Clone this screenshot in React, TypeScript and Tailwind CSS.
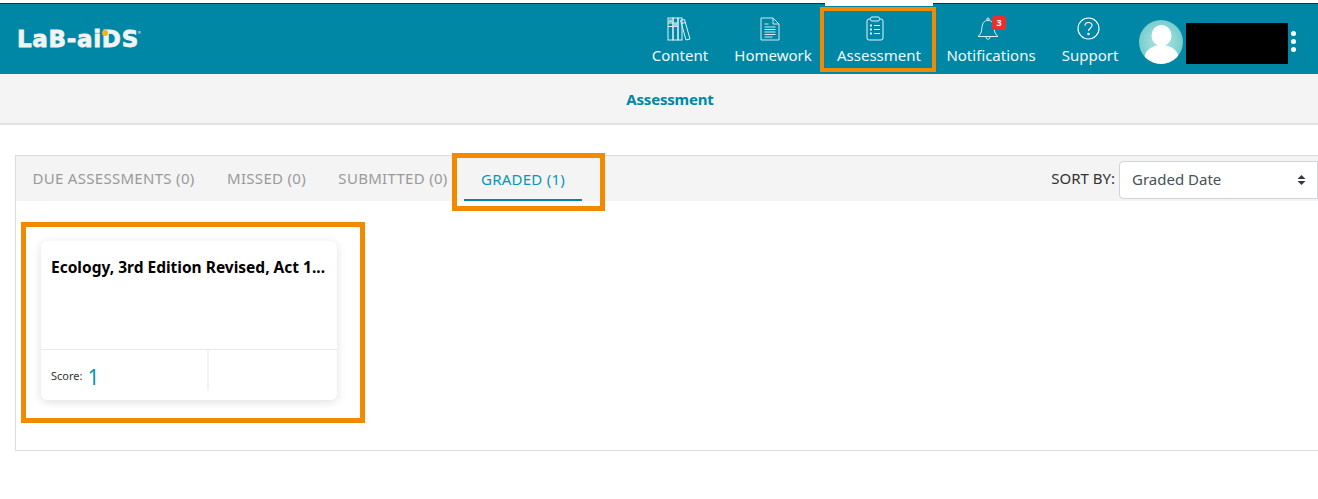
const font = { fontFamily: '"Noto Sans", "Open Sans", sans-serif' };

function ContentIcon() {
  return (
    <svg width="24" height="24" viewBox="0 0 24 24" fill="none" stroke="#dff3f7" strokeWidth="1">
      <rect x="1" y="1" width="5" height="22" />
      <rect x="6" y="1" width="5" height="22" />
      <rect x="11" y="1" width="4" height="22" />
      <path d="M1 6h10M1 9.500h10" />
      <path d="M1.500 2.500h4v3h-4zM6.500 6h4v3.500h-4z" fill="#9fd3df" stroke="none" />
      <path d="M13.500 3.500l4-1 5.500 19.500-4 1z" />
      <path d="M14.500 6.500l4-1" />
    </svg>
  );
}

function HomeworkIcon() {
  return (
    <svg width="20" height="24" viewBox="0 0 20 24" fill="none" stroke="#cfeaf0" strokeWidth="1">
      <path d="M1 1h12l6 6v16H1z" />
      <path d="M13 1v6h6" />
      <path d="M4.500 7h4M4.500 10h11M4.500 12.500h11M4.500 15h11M4.500 17.500h11M4.500 20h8" />
    </svg>
  );
}

function AssessmentIcon() {
  return (
    <svg width="18" height="25" viewBox="0 0 18 25" fill="none" stroke="#e4f5f8" strokeWidth="1">
      <rect x="1" y="3" width="16" height="21" rx="2" />
      <rect x="4.500" y="1" width="9" height="4" rx="1.500" fill="#0087a5" />
      <path d="M4 9.500h2M4 13.500h2M4 17.500h2" strokeWidth="2" />
      <path d="M8 9.500h6M8 13.500h6M8 17.500h6" />
    </svg>
  );
}

function BellIcon() {
  return (
    <svg width="22" height="24" viewBox="0 0 22 24" fill="none" stroke="#dff3f7" strokeWidth="1">
      <path d="M1 19.500c2.500-2 3.500-4 3.800-8C5.200 6.500 7 3.500 11 3.300c4 .2 5.800 3.200 6.200 8.200.3 4 1.300 6 3.800 8z" />
      <circle cx="11" cy="2.200" r="1.200" />
      <path d="M9 20c0 3 4 3 4 0" />
    </svg>
  );
}

function HelpIcon() {
  return (
    <svg width="23" height="23" viewBox="0 0 23 23" fill="none" stroke="#ffffff" strokeWidth="1.100">
      <circle cx="11.500" cy="11.500" r="10.500" />
      <path d="M8 8.800c0-2 1.600-3.300 3.500-3.300s3.500 1.300 3.500 3c0 2.800-3.500 2.600-3.500 5.500" />
      <circle cx="11.500" cy="17" r=".7" fill="#ffffff" />
    </svg>
  );
}

function Avatar() {
  return (
    <div className="w-11 h-11 rounded-full overflow-hidden shrink-0 bg-[radial-gradient(circle,#b5e8e5_0%,#5fc1c4_100%)]">
      <svg width="44" height="44" viewBox="0 0 44 44" fill="#ffffff">
        <ellipse cx="22.500" cy="15.500" rx="10" ry="10.500" />
        <ellipse cx="22.500" cy="38" rx="17" ry="13" />
      </svg>
    </div>
  );
}

const navItems = [
  { label: "Content", icon: <ContentIcon />, width: "w-[92px]", shift: "-ml-[3px]" },
  { label: "Homework", icon: <HomeworkIcon />, width: "w-[94px]", shift: "-ml-[7px]" },
  { label: "Assessment", icon: <AssessmentIcon />, width: "w-[118px]", shift: "-ml-[9px]", active: true },
  { label: "Notifications", icon: <BellIcon />, width: "w-[106px]", shift: "-ml-[6px]", badge: "3" },
  { label: "Support", icon: <HelpIcon />, width: "w-[92px]", shift: "-ml-[4px]" },
];

const tabs = [
  { label: "DUE ASSESSMENTS (0)", width: "w-[195px]" },
  { label: "MISSED (0)", width: "w-[111px]" },
  { label: "SUBMITTED (0)", width: "w-[142px]" },
];

export default function App() {
  return (
    <div className="bg-white min-h-[499px] overflow-hidden" style={font}>
      <div className="h-[3px] bg-white" />
      <header className="h-[71px] bg-[#0087a5] border-t border-[#2b2b2b] flex items-stretch">
        <div className="pl-[17px] pt-[22px] w-[634px] shrink-0">
          <div className="relative w-fit text-[23px] leading-[26px] font-black text-[#f0f4f4] tracking-[0.7px] [-webkit-text-stroke:0.8px_#f0f4f4] [font-family:'DejaVu_Sans',sans-serif]">
            LaB-aiDS
            <span className="absolute left-[85px] top-[4px] w-[6px] h-[6px] rounded-full bg-[#f7b21b] [-webkit-text-stroke:0]" />
            <span className="absolute -right-[3px] top-[5px] text-[4px] leading-[4px] font-normal [-webkit-text-stroke:0]">®</span>
          </div>
        </div>
        <nav className="flex items-stretch">
          {navItems.map((item) => (
            <div key={item.label} className={`relative flex flex-col items-center ${item.width}`}>
              {item.active && (
                <>
                  <span className="absolute -top-px left-[5px] w-[108px] h-[3px] bg-white" />
                  <span className="absolute top-[3px] left-0 w-[116px] h-[65px] border-[4px] border-[#f28a00]" />
                </>
              )}
              <div className={`h-[25px] mt-[12px] flex items-center justify-center relative ${item.shift}`}>
                {item.icon}
                {item.badge && (
                  <span className="absolute left-[15px] top-[0px] w-[14px] h-[14px] rounded-[3px] bg-[#ee2e2e] text-white text-[9px] leading-[14px] font-bold text-center">
                    {item.badge}
                  </span>
                )}
              </div>
              <span className="mt-[3px] text-[15px] leading-[22px] text-[#f0fafb] whitespace-nowrap">
                {item.label}
              </span>
            </div>
          ))}
        </nav>
        <div className="ml-[3px] pt-[16px] flex items-start">
          <Avatar />
          <div className="ml-[3px] mt-[3px] w-[102px] h-[41px] bg-black" />
          <div className="ml-[3px] mt-[11px] flex flex-col gap-[3px]">
            <span className="w-[5px] h-[5px] rounded-full bg-white" />
            <span className="w-[5px] h-[5px] rounded-full bg-white" />
            <span className="w-[5px] h-[5px] rounded-full bg-white" />
          </div>
        </div>
      </header>

      <div className="h-[51px] bg-[#f4f4f4] border-b-2 border-[#e3e3e3] flex items-center justify-center pl-[22px] pt-[2px]">
        <span className="text-[15px] font-bold text-[#0087a5] tracking-[-0.2px]">Assessment</span>
      </div>

      <main className="ml-[15px] mt-[30px] h-[296px] border border-[#dddddd] border-r-0">
        <div className="h-[45px] bg-[#f4f4f4] flex items-stretch">
          {tabs.map((tab) => (
            <div
              key={tab.label}
              className={`${tab.width} pt-[11px] text-center text-[15px] leading-[22px] text-[#9a9a9a] whitespace-nowrap tracking-[0.3px]`}
            >
              {tab.label}
            </div>
          ))}
          <div className="relative w-[118px]">
            <div className="pt-[12px] text-center text-[15px] leading-[22px] text-[#0a95b4] whitespace-nowrap tracking-[0.25px]">
              GRADED (1)
            </div>
            <span className="absolute left-0 right-0 top-[43px] h-[2px] bg-[#0087a5]" />
            <span className="absolute -left-[12px] -top-[3px] w-[153px] h-[58px] border-[5px] border-[#f28a00]" />
          </div>
          <div className="ml-auto flex items-center">
            <span className="text-[15px] text-[#333333] whitespace-nowrap mr-[4px]">SORT BY:</span>
            <div className="w-[199px] h-[38px] mt-[2px] bg-white border border-[#ced4da] rounded-l-[4px] flex items-center pl-[12px] text-[15px] text-[#495057]">
              Graded Date
              <svg className="ml-auto mr-[11px]" width="9" height="12" viewBox="0 0 9 12" fill="#343a40">
                <path d="M4.500 1L8.500 5H.5zM4.500 11L.5 7h8z" />
              </svg>
            </div>
          </div>
        </div>

        <div className="pl-[25px] pt-[40px]">
          <div className="relative w-[296px] h-[159px] rounded-[6px] bg-white shadow-[0_2px_10px_rgba(0,0,0,0.13)] flex flex-col">
            <span className="absolute -left-[20px] -top-[19px] w-[344px] h-[201px] border-[5px] border-[#f28a00]" />
            <div className="h-[109px] pl-[10px] pt-[15px] border-b border-[#e8e8e8]">
              <p className="text-[15.5px] leading-[22px] font-bold text-black whitespace-nowrap">
                Ecology, 3rd Edition Revised, Act 1...
              </p>
            </div>
            <div className="flex">
              <div className="w-[168px] h-[40px] border-r-2 border-[#f2f2f2] pl-[10px] flex items-center pt-[13px]">
                <span className="text-[11px] text-[#333333]">Score:</span>
                <span className="ml-[5px] text-[21px] leading-[20px] text-[#0a95b4]">1</span>
              </div>
            </div>
          </div>
        </div>
      </main>
    </div>
  );
}
